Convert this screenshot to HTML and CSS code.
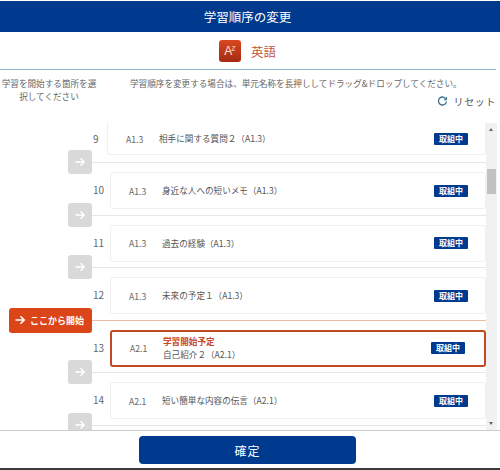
FILE: index.html
```html
<!DOCTYPE html>
<html lang="ja">
<head>
	<meta charset="UTF-8">
	<title>学習順序の変更</title>
	<link rel="stylesheet" href="styles.css">
</head>
<body>
	<div class="page">
		<div class="header">学習順序の変更</div>

		<div class="subject">
			<span class="subject-icon"><span class="big">A</span><span class="small">Z</span></span>
			<span class="subject-name">英語</span>
		</div>

		<div class="intro">
			<p class="intro-left">学習を開始する箇所を選択してください</p>
			<div class="intro-right">
				<p>学習順序を変更する場合は、単元名称を長押ししてドラッグ&amp;ドロップしてください。</p>
				<a href="javascript:;" class="reset">
					<svg width="11" height="11" viewBox="0 0 11 11" fill="none" stroke="#3a6f8f" stroke-width="1.3">
						<path d="M9.2 3.4A4 4 0 1 0 9.5 5.5"/>
						<path d="M9.6 1.2v2.6H7" stroke-width="1"/>
					</svg>
					<span>リセット</span>
				</a>
			</div>
		</div>

		<div class="scroller">
			<div class="list">
				<div class="row first">
					<span class="num">9</span>
					<div class="card">
						<span class="level">A1.3</span>
						<span class="title">相手に関する質問２（A1.3）</span>
						<span class="badge">取組中</span>
					</div>
					<a class="go"><svg width="12" height="12" viewBox="0 0 12 12" fill="none" stroke="#fff" stroke-width="1.4"><path d="M1.5 6h8.5M6.5 2.2 10.2 6l-3.7 3.8"/></svg></a>
				</div>
				<div class="row">
					<span class="num">10</span>
					<div class="card">
						<span class="level">A1.3</span>
						<span class="title">身近な人への短いメモ（A1.3）</span>
						<span class="badge">取組中</span>
					</div>
					<a class="go"><svg width="12" height="12" viewBox="0 0 12 12" fill="none" stroke="#fff" stroke-width="1.4"><path d="M1.5 6h8.5M6.5 2.2 10.2 6l-3.7 3.8"/></svg></a>
				</div>
				<div class="row">
					<span class="num">11</span>
					<div class="card">
						<span class="level">A1.3</span>
						<span class="title">過去の経験（A1.3）</span>
						<span class="badge">取組中</span>
					</div>
					<a class="go"><svg width="12" height="12" viewBox="0 0 12 12" fill="none" stroke="#fff" stroke-width="1.4"><path d="M1.5 6h8.5M6.5 2.2 10.2 6l-3.7 3.8"/></svg></a>
				</div>
				<div class="row start">
					<span class="num">12</span>
					<div class="card">
						<span class="level">A1.3</span>
						<span class="title">未来の予定１（A1.3）</span>
						<span class="badge">取組中</span>
					</div>
					<a class="go-start"><svg width="12" height="12" viewBox="0 0 12 12" fill="none" stroke="#fff" stroke-width="1.6"><path d="M1.5 6h8.5M6.5 2.2 10.2 6l-3.7 3.8"/></svg>ここから開始</a>
				</div>
				<div class="row">
					<span class="num">13</span>
					<div class="card current">
						<span class="level">A2.1</span>
						<span class="title"><b>学習開始予定</b>自己紹介２（A2.1）</span>
						<span class="badge">取組中</span>
					</div>
					<a class="go"><svg width="12" height="12" viewBox="0 0 12 12" fill="none" stroke="#fff" stroke-width="1.4"><path d="M1.5 6h8.5M6.5 2.2 10.2 6l-3.7 3.8"/></svg></a>
				</div>
				<div class="row">
					<span class="num">14</span>
					<div class="card">
						<span class="level">A2.1</span>
						<span class="title">短い簡単な内容の伝言（A2.1）</span>
						<span class="badge">取組中</span>
					</div>
					<a class="go"><svg width="12" height="12" viewBox="0 0 12 12" fill="none" stroke="#fff" stroke-width="1.4"><path d="M1.5 6h8.5M6.5 2.2 10.2 6l-3.7 3.8"/></svg></a>
				</div>
			</div>
			<div class="scrollbar">
				<span class="up"></span>
				<span class="thumb"></span>
				<span class="down"></span>
			</div>
		</div>

		<div class="footer">
			<a href="javascript:;" class="confirm">確定</a>
		</div>
		<div class="strip"></div>
	</div>
</body>
</html>
```

FILE: styles.css
```css
* {
    margin: 0;
    padding: 0;
    box-sizing: border-box;
    text-decoration: none;
}

body {
    width: 500px;
    height: 470px;
    overflow: hidden;
    background: #fff;
    font-family: "Noto Sans CJK JP", "Noto Sans", sans-serif;
    color: #555;
}

.page {
    display: flex;
    flex-direction: column;
    height: 470px;
    padding-top: 1px;
}

.header {
    height: 31px;
    padding-right: 5px;
    line-height: 31px;
    text-align: center;
    font-size: 12.5px;
    color: #fff;
    background: #003a8f;
}

.subject {
    display: flex;
    align-items: center;
    justify-content: center;
    gap: 10px;
    height: 38px;
    width: 496px;
    padding: 1px 1px 0 0;
    border-bottom: 1px solid #8fb3c9;
}

.subject-icon {
    display: flex;
    align-items: center;
    justify-content: center;
    width: 22px;
    height: 22px;
    border-radius: 3px;
    color: #fbe3da;
    background: linear-gradient(#d8481f, #a52a12);
    font-family: "Liberation Sans", sans-serif;
    line-height: 1;
}

.subject-icon .big {
    font-size: 12px;
}

.subject-icon .small {
    font-size: 7px;
    margin: -5px 0 0 -1px;
}

.subject-name {
    font-size: 12.5px;
    color: #c4543c;
}

.intro {
    display: flex;
    height: 53px;
    font-size: 8.6px;
    line-height: 13px;
    padding-top: 7px;
    color: #666;
}

.intro-left {
    width: 98px;
    text-align: center;
}

.intro-right {
    display: flex;
    flex-direction: column;
    flex: 1;
    padding-left: 32px;
}

.reset {
    display: flex;
    align-items: center;
    align-self: flex-end;
    gap: 6px;
    margin: 5px 4px 0 0;
    font-size: 10px;
    letter-spacing: 0.6px;
    color: #555;
}

.scroller {
    display: flex;
    width: 497px;
    height: 307px;
    overflow: hidden;
}

.list {
    flex: 1;
    margin-top: -12.6px;
}

.row {
    position: relative;
    display: flex;
    align-items: flex-start;
    height: 52.6px;
    margin-left: 92px;
    padding-top: 9px;
    border-bottom: 1px solid #e6e6e6;
}

.num {
    position: absolute;
    left: 1px;
    top: 19px;
    font-size: 10px;
    color: #666;
}

.card {
    display: flex;
    align-items: center;
    width: 376px;
    height: 37px;
    margin-left: 18px;
    padding-left: 18px;
    background: #fff;
    border: 1px solid #f0f0f0;
    border-radius: 3px;
    font-size: 8.6px;
    color: #555;
}

/* 一番上の行はスクロールで上が切れている */
.row.first {
    padding-top: 0;
}

.row.first .num {
    top: 21px;
}

.row.first .card {
    width: 379px;
    height: 45px;
    margin-left: 15px;
    padding-top: 12px;
}

.level {
    width: 33px;
    font-size: 8.6px;
    color: #666;
}

.title {
    flex: 1;
    line-height: 13px;
}

.title b {
    display: block;
    font-weight: bold;
    color: #c9481f;
}

.badge {
    width: 34px;
    height: 12px;
    margin-right: 17px;
    line-height: 12px;
    text-align: center;
    font-size: 8px;
    font-weight: bold;
    color: #fff;
    background: #003a8f;
    border-radius: 1px;
}

.card.current {
    border: 2px solid #c24a22;
}

.card.current .badge {
    margin-right: 19px;
}

.go {
    position: absolute;
    left: -24px;
    bottom: -12px;
    z-index: 1;
    display: flex;
    align-items: center;
    justify-content: center;
    width: 24px;
    height: 24px;
    background: #d9d9d9;
    border-radius: 3px;
}

.row.start {
    border-bottom-color: #eeb9a5;
}

.go-start {
    position: absolute;
    left: -83px;
    bottom: -13px;
    z-index: 1;
    display: flex;
    align-items: center;
    gap: 4px;
    width: 83px;
    height: 25px;
    padding-left: 5px;
    font-size: 9px;
    font-weight: bold;
    color: #fff;
    background: #dc4518;
    border-radius: 3px;
}

.scrollbar {
    position: relative;
    width: 11px;
    background: #f1f1f1;
}

.thumb {
    position: absolute;
    top: 46px;
    left: 1px;
    width: 9px;
    height: 25px;
    background: #c1c1c1;
}

.up,
.down {
    position: absolute;
    left: 3px;
    width: 0;
    height: 0;
    border-left: 2.5px solid transparent;
    border-right: 2.5px solid transparent;
}

.up {
    top: 5px;
    border-bottom: 3px solid #666;
}

.down {
    bottom: 5px;
    border-top: 3px solid #666;
}

.footer {
    display: flex;
    justify-content: center;
    height: 38px;
    padding: 5px 5px 0 0;
    border-top: 1px solid #ccc;
}

.confirm {
    width: 217px;
    height: 28px;
    line-height: 29px;
    text-align: center;
    font-size: 12px;
    letter-spacing: 1px;
    color: #fff;
    background: #003a8f;
    border-radius: 4px;
}

.strip {
    height: 2px;
    background: #3a3a3a;
}
```
